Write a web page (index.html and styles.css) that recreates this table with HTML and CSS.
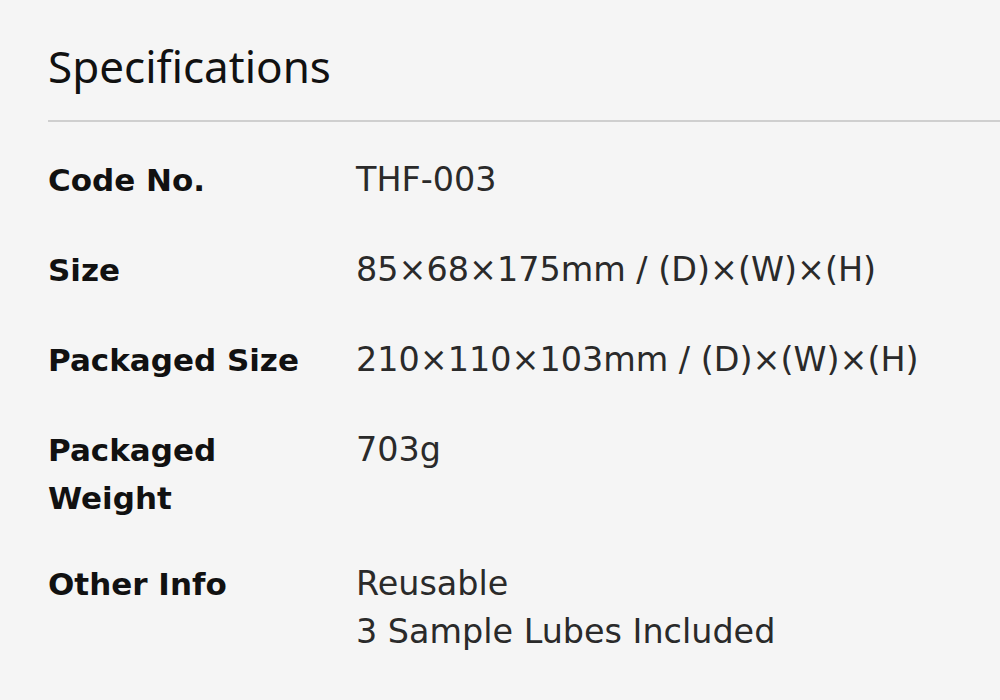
FILE: index.html
```html
<!DOCTYPE html>
<html lang="en">
<head>
    <meta charset="UTF-8">
    <meta name="viewport" content="width=device-width, initial-scale=1.0">
    <title>Specifications</title>
    <link rel="stylesheet" href="styles.css">
</head>
<body>
    <section class="spec-section">
        <h2 class="spec-title">Specifications</h2>

        <dl class="spec-table">
            <div class="spec-row">
                <dt>Code No.</dt>
                <dd>THF-003</dd>
            </div>
            <div class="spec-row">
                <dt>Size</dt>
                <dd>85×68×175mm / (D)×(W)×(H)</dd>
            </div>
            <div class="spec-row">
                <dt>Packaged Size</dt>
                <dd>210×110×103mm / (D)×(W)×(H)</dd>
            </div>
            <div class="spec-row spec-row-tall">
                <dt>Packaged<br>Weight</dt>
                <dd>703g</dd>
            </div>
            <div class="spec-row">
                <dt>Other Info</dt>
                <dd>Reusable<br>3 Sample Lubes Included</dd>
            </div>
        </dl>
    </section>
</body>
</html>
```

FILE: styles.css
```css
* {
    margin: 0;
    padding: 0;
    box-sizing: border-box;
}

body {
    font-family: 'DejaVu Sans', Verdana, sans-serif;
    background-color: #f5f5f5;
    color: #1a1a1a;
    overflow: hidden;
}

.spec-section {
    padding: 40px 0 0 48px;
}

.spec-title {
    font-family: 'Noto Sans', 'Open Sans', sans-serif;
    font-size: 44px;
    font-weight: 400;
    line-height: 1.2;
    color: #111;
    padding-bottom: 27px;
    border-bottom: 2px solid #cfcfcf;
}

.spec-table {
    margin-top: 13px;
}

.spec-row {
    display: grid;
    grid-template-columns: 308px 1fr;
    padding: 21px 0;
}

.spec-row-tall {
    padding-bottom: 17px;
}

.spec-row dt {
    font-size: 31px;
    font-weight: 700;
    line-height: 48px;
    color: #111;
}

.spec-row dd {
    font-size: 33.4px;
    line-height: 48px;
    color: #2a2a2a;
}
```
